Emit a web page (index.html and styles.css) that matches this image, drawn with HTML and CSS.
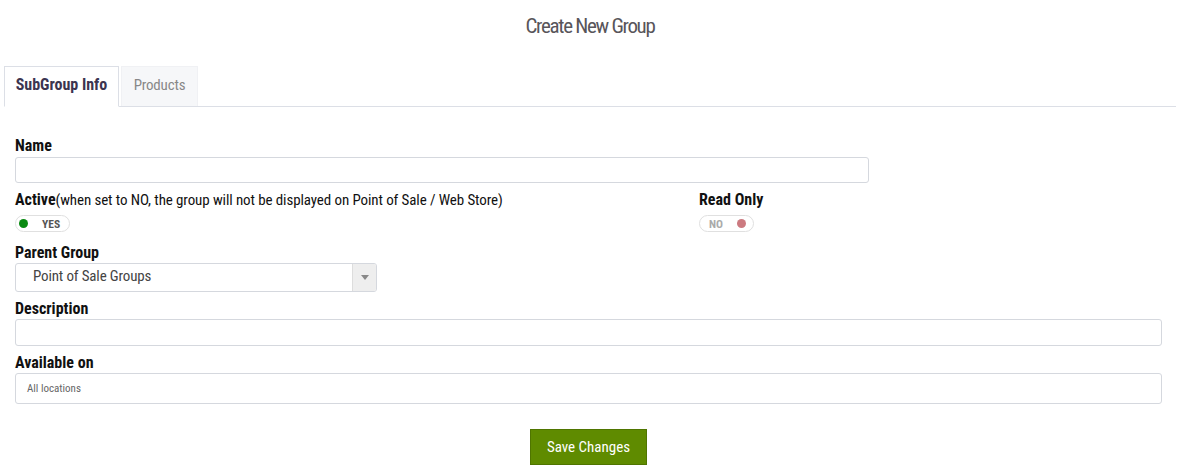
FILE: index.html
```html
<!DOCTYPE html>
<html>
<head>
<meta charset="utf-8">
<title>Create New Group</title>
<link rel="stylesheet" href="styles.css">
</head>
<body>
<div class="page">
  <h1 class="title">Create New Group</h1>
  <div class="tabs">
    <div class="tab tab-active">SubGroup Info</div>
    <div class="tab tab-inactive">Products</div>
  </div>
  <form class="form">
    <div class="field field-name">
      <label class="label">Name</label>
      <div class="input input-name"></div>
    </div>
    <div class="row">
      <div class="field">
        <label class="label">Active<span class="hint">(when set to NO, the group will not be displayed on Point of Sale / Web Store)</span></label>
        <div class="toggle toggle-on"><span class="dot dot-green"></span><span class="toggle-text">YES</span></div>
      </div>
      <div class="field">
        <label class="label">Read Only</label>
        <div class="toggle toggle-off"><span class="toggle-text">NO</span><span class="dot dot-red"></span></div>
      </div>
    </div>
    <div class="field">
      <label class="label">Parent Group</label>
      <div class="select">
        <span class="select-text">Point of Sale Groups</span>
        <span class="select-arrow"><span class="caret"></span></span>
      </div>
    </div>
    <div class="field">
      <label class="label">Description</label>
      <div class="input input-desc"></div>
    </div>
    <div class="field">
      <label class="label">Available on</label>
      <div class="input input-avail"><span class="avail-text">All locations</span></div>
    </div>
    <div class="actions">
      <button type="button" class="btn-save">Save Changes</button>
    </div>
  </form>
</div>
</body>
</html>
```
FILE: styles.css
```css
html, body {
  margin: 0;
  padding: 0;
  background: #ffffff;
}
body {
  font-family: "Roboto Condensed", Roboto, sans-serif;
  color: #111;
}
.page {
  padding: 0 4px;
}
.title {
  margin: 0;
  padding-top: 12px;
  height: 28px;
  line-height: 28px;
  font-size: 21px;
  font-weight: 400;
  letter-spacing: -1.3px;
  text-align: center;
  color: #58555a;
}
.tabs {
  display: flex;
  gap: 2px;
  margin-top: 26px;
  border-bottom: 1px solid #dcdfe6;
  width: 1172px;
}
.tab {
  box-sizing: border-box;
  text-align: center;
  line-height: 36px;
}
.tab-active {
  width: 115px;
  height: 41px;
  border: 1px solid #dcdfe6;
  border-bottom: 1px solid #fff;
  background: #fff;
  font-size: 16px;
  font-weight: 700;
  color: #3b3450;
  margin-bottom: -1px;
}
.tab-inactive {
  width: 77px;
  height: 40px;
  background: #f6f7f9;
  border: 1px solid #f0f1f4;
  border-bottom: none;
  font-size: 15px;
  color: #888;
  letter-spacing: -0.2px;
}
.form {
  padding: 29px 14px 0 11px;
}
.field {
  margin-bottom: 7px;
}
.label {
  display: block;
  font-size: 16px;
  line-height: 18px;
  font-weight: 700;
  color: #111;
  padding-top: 1px;
  margin-bottom: 1px;
}
.field-name .label {
  margin-bottom: 2px;
}
.hint {
  font-weight: 400;
  font-size: 15px;
  letter-spacing: -0.1px;
}
.input {
  box-sizing: border-box;
  border: 1px solid #d5d8de;
  border-radius: 3px;
  background: #fff;
}
.input-name {
  width: 854px;
  height: 26px;
}
.input-desc {
  width: 1147px;
  height: 27px;
}
.input-avail {
  width: 1147px;
  height: 31px;
  display: flex;
  align-items: center;
  padding-left: 11px;
}
.avail-text {
  font-size: 11px;
  color: #666;
}
.row {
  display: grid;
  grid-template-columns: 684px 1fr;
}
.row .field {
  margin-bottom: 11px;
}
.toggle {
  margin-top: 6px;
  box-sizing: border-box;
  width: 55px;
  height: 17px;
  border: 1px solid #e0e0e0;
  border-radius: 9px;
  display: flex;
  align-items: center;
  font-size: 11.5px;
  font-weight: 700;
}
.toggle-on {
  padding-left: 3px;
  gap: 14px;
}
.toggle-on .toggle-text {
  color: #555;
}
.toggle-off {
  padding-left: 9px;
  gap: 14px;
}
.toggle-off .toggle-text {
  color: #aaa;
}
.dot {
  width: 9px;
  height: 9px;
  border-radius: 50%;
  display: block;
}
.dot-green {
  background: #0a8a12;
}
.dot-red {
  background: #cc7a80;
}
.select {
  box-sizing: border-box;
  width: 362px;
  height: 29px;
  border: 1px solid #d5d8de;
  border-radius: 3px;
  display: flex;
  align-items: stretch;
  overflow: hidden;
}
.select-text {
  flex: 1;
  padding-left: 17px;
  font-size: 15px;
  line-height: 25px;
  color: #444;
  letter-spacing: -0.15px;
}
.select-arrow {
  width: 23px;
  background: #eeeeee;
  border-left: 1px solid #dddddd;
  display: flex;
  align-items: center;
  justify-content: center;
}
.caret {
  width: 0;
  height: 0;
  border-left: 4px solid transparent;
  border-right: 4px solid transparent;
  border-top: 5px solid #888;
}
.actions {
  display: flex;
  justify-content: center;
  padding-top: 18px;
  width: 1147px;
}
.btn-save {
  width: 117px;
  height: 36px;
  background: #5f8b00;
  border: 1px solid #4f7500;
  color: #fff;
  font-family: inherit;
  font-size: 15px;
  padding: 0;
  cursor: pointer;
}
```
